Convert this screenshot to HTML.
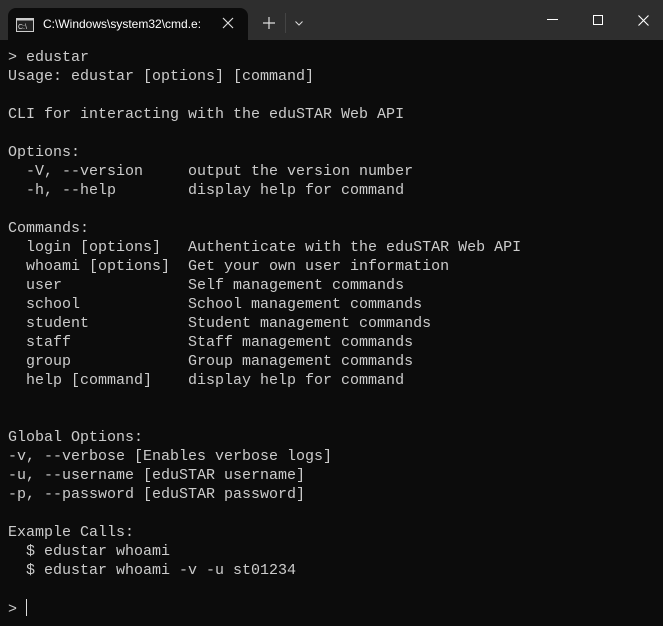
<!DOCTYPE html>
<html><head><style>
html,body{margin:0;padding:0;width:663px;height:626px;overflow:hidden;background:#0c0c0c}
.tb{position:absolute;left:0;top:0;width:663px;height:40px;background:#2e2e2e}
.tab{position:absolute;left:8px;top:8px;width:240px;height:34px;background:#0c0c0c;border-radius:8px 8px 0 0}
.tt{position:absolute;left:43px;top:17px;font:12px "Liberation Sans",sans-serif;color:#fff;white-space:nowrap}
pre{position:absolute;left:8px;top:48px;margin:0;font:15px/19px "Liberation Mono",monospace;color:#cccccc}
.cur{display:inline-block;width:1px;height:17px;background:#ddd;vertical-align:-3px}
</style></head><body>
<div class="tb">
<div class="tab"></div>
<svg style="position:absolute;left:16px;top:18px" width="18" height="14"><rect x="0.5" y="0.5" width="17" height="13" fill="#222" stroke="#ccc"/><rect x="0.5" y="0.5" width="17" height="2" fill="#ccc"/><text x="2" y="11" font-size="7" fill="#ddd" font-family="Liberation Sans">C:\</text></svg>
<div class="tt">C:\Windows\system32\cmd.e:</div>
<svg style="position:absolute;left:222px;top:17px" width="12" height="12"><path d="M1 1L11 11M11 1L1 11" stroke="#ddd" stroke-width="1.2"/></svg>
<svg style="position:absolute;left:263px;top:17px" width="12" height="12"><path d="M6 0V12M0 6H12" stroke="#ddd" stroke-width="1.2"/></svg>
<div style="position:absolute;left:285px;top:13px;width:1px;height:20px;background:#444"></div>
<svg style="position:absolute;left:295px;top:21px" width="8" height="5"><path d="M0.5 0.5L4 4L7.5 0.5" stroke="#ddd" fill="none"/></svg>
<div style="position:absolute;left:547px;top:19px;width:11px;height:1px;background:#fff"></div>
<div style="position:absolute;left:593px;top:15px;width:8px;height:8px;border:1px solid #fff"></div>
<svg style="position:absolute;left:638px;top:15px" width="11" height="11"><path d="M0.5 0.5L10.5 10.5M10.5 0.5L0.5 10.5" stroke="#fff" stroke-width="1.1"/></svg>
</div>
<pre>&gt; edustar
Usage: edustar [options] [command]

CLI for interacting with the eduSTAR Web API

Options:
  -V, --version     output the version number
  -h, --help        display help for command

Commands:
  login [options]   Authenticate with the eduSTAR Web API
  whoami [options]  Get your own user information
  user              Self management commands
  school            School management commands
  student           Student management commands
  staff             Staff management commands
  group             Group management commands
  help [command]    display help for command


Global Options:
-v, --verbose [Enables verbose logs]
-u, --username [eduSTAR username]
-p, --password [eduSTAR password]

Example Calls:
  $ edustar whoami
  $ edustar whoami -v -u st01234

&gt; <span class="cur"></span></pre>
</body></html>
